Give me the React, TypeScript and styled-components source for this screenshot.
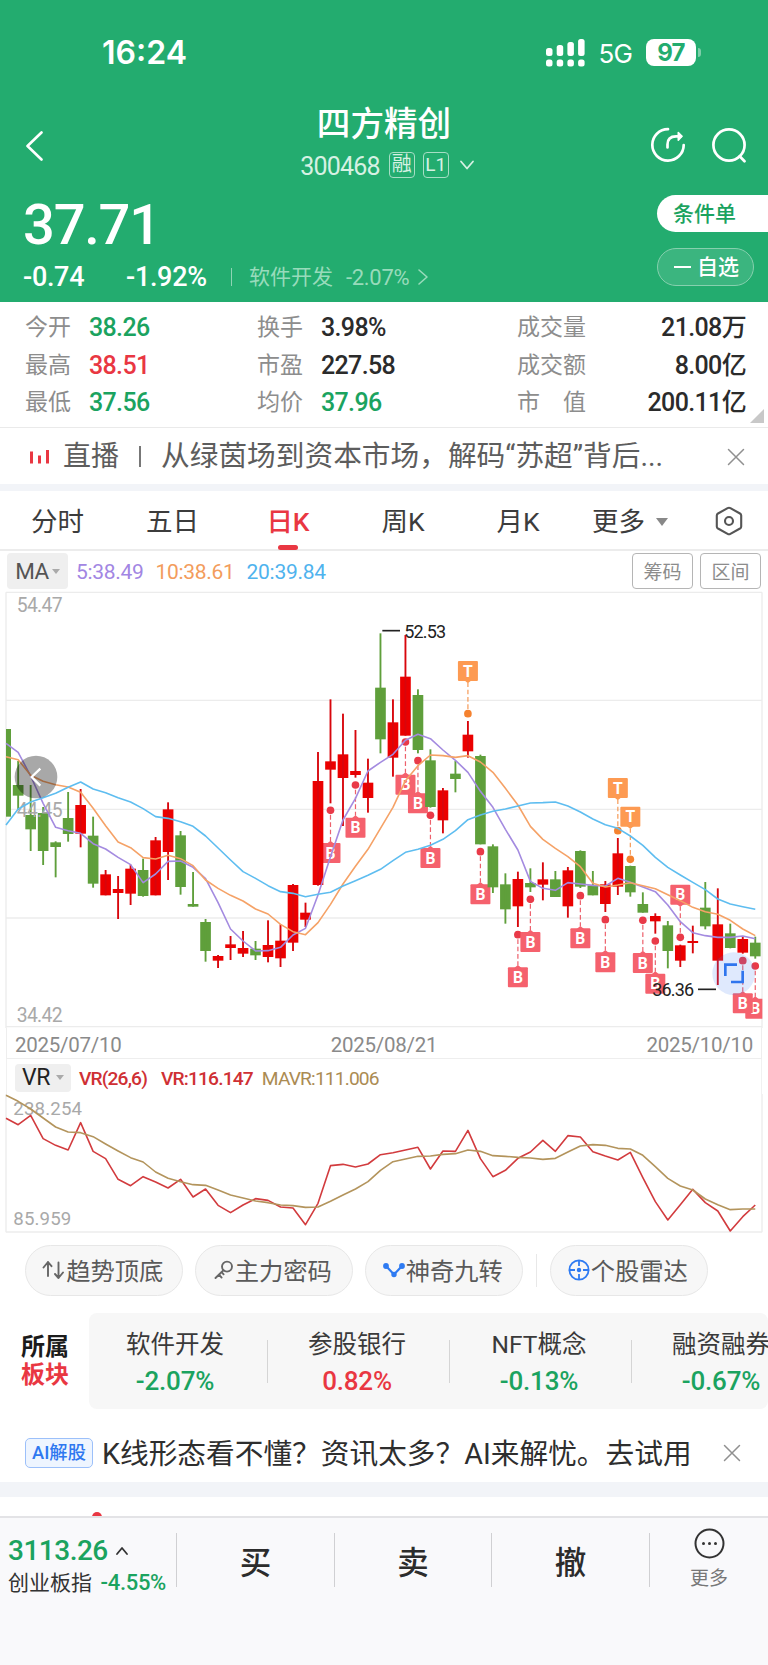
import React from "react";
import styled, { createGlobalStyle, css } from "styled-components";

const GREEN = "#23ac6f";
const UP = "#e93742";
const DOWN = "#1ba35f";
const CJK = `"Noto Sans CJK SC", sans-serif`;
const DIGITS = `Roboto, "Noto Sans CJK SC", sans-serif`;

type Tone = "up" | "down" | "plain";
const toneColor: Record<Tone, string> = { up: UP, down: DOWN, plain: "#2b2b2b" };

const GlobalStyle = createGlobalStyle`
  * { box-sizing: border-box; }
  body { margin: 0; background: #fff; font-family: ${DIGITS}; }
`;

const Screen = styled.div`
  width: 768px;
  height: 1665px;
  overflow: hidden;
  display: flex;
  flex-direction: column;
  background: #fff;
  color: #333;
  line-height: 1;
  white-space: nowrap;
`;

/* ---------- header ---------- */

const Header = styled.header`
  height: 302px;
  flex: none;
  background: ${GREEN};
  color: #fff;
  display: flex;
  flex-direction: column;
`;

const StatusBar = styled.div`
  height: 96px;
  padding: 9px 67px 0 102px;
  display: flex;
  align-items: center;
`;

const Clock = styled.span`
  font: 600 32px/1 Inter, sans-serif;
  flex: 1;
`;

const Network = styled.span`
  font: 400 26px/1 Inter, sans-serif;
  letter-spacing: -0.8px;
  margin: 2px 14px 0 13px;
`;

const Battery = styled.span`
  width: 50px;
  height: 27px;
  border-radius: 8px;
  background: #fff;
  color: ${GREEN};
  font: 700 24px/27px Inter, sans-serif;
  letter-spacing: -0.8px;
  text-align: center;
`;

const BatteryTip = styled.span`
  width: 3px;
  height: 9px;
  margin-left: 2px;
  border-radius: 0 3px 3px 0;
  background: #7fceaa;
`;

const NavBar = styled.div`
  height: 90px;
  display: grid;
  grid-template-columns: 200px 1fr 200px;
  padding: 0 21px 0 24px;
`;

const NavBack = styled.div`
  display: flex;
  align-items: center;
  padding-top: 9px;
`;

const NavActions = styled.div`
  display: flex;
  align-items: center;
  justify-content: flex-end;
  gap: 25px;
  padding-top: 8px;
`;

const TitleBlock = styled.div`
  display: flex;
  flex-direction: column;
  align-items: center;
`;

const StockName = styled.h1`
  margin: 8px 3px 0 0;
  font: 500 33.6px/36px ${CJK};
`;

const CodeRow = styled.div`
  display: flex;
  align-items: center;
  margin: 11px 0 0 4px;
  height: 27px;
  color: #d6f1e3;
  & > svg {
    margin-left: 2px;
  }
`;

const StockCode = styled.span`
  font-size: 25px;
  letter-spacing: -0.8px;
  margin-right: 9px;
  padding-top: 3px;
`;

const Badge = styled.span<{ $size: number }>`
  width: 26px;
  height: 26px;
  margin-right: 8px;
  border: 1.5px solid #a7dec5;
  border-radius: 4px;
  font: 400 ${(p) => p.$size}px/23px ${DIGITS};
  text-align: center;
`;

const Quote = styled.div`
  display: flex;
  justify-content: space-between;
  height: 116px;
`;

const QuoteLeft = styled.div`
  padding-left: 23px;
`;

const Price = styled.div`
  font-size: 56px;
  font-weight: 500;
  line-height: 60px;
  margin-top: 9px;
  letter-spacing: -1.2px;
`;

const ChangeRow = styled.div`
  display: flex;
  align-items: center;
  height: 30px;
  margin-top: 7px;
`;

const Change = styled.span<{ $width: number }>`
  font-size: 27px;
  font-weight: 500;
  letter-spacing: -0.3px;
  width: ${(p) => p.$width}px;
`;

const ChangeDivider = styled.span`
  width: 1px;
  height: 18px;
  background: #8fd4b4;
  margin-right: 17px;
`;

const Industry = styled.span`
  display: flex;
  align-items: center;
  color: #98dbbb;
  font-size: 21px;
`;

const IndustryPct = styled.span`
  font-size: 22px;
  margin: 1px 8px 0 13px;
  letter-spacing: -0.3px;
`;

const QuoteActions = styled.div`
  display: flex;
  flex-direction: column;
  gap: 16px;
  padding-top: 9px;
`;

const OrderButton = styled.div`
  width: 111px;
  height: 37px;
  padding-left: 16px;
  border-radius: 19px 0 0 19px;
  background: #fff;
  color: ${DOWN};
  font: 500 21px/35px ${CJK};
`;

const WatchButton = styled.div`
  width: 97px;
  height: 38px;
  padding: 0 0 3px 16px;
  border: 1px solid #86d0ae;
  border-radius: 19px;
  background: #3bb57f;
  font: 500 21px/1 ${CJK};
  display: flex;
  align-items: center;
  gap: 6px;
`;

const Minus = styled.i`
  width: 17px;
  height: 2.5px;
  margin-top: 3px;
  background: #fff;
`;

/* ---------- statistics ---------- */

const Stats = styled.section`
  position: relative;
  height: 126px;
  flex: none;
  padding: 5px 22px 0 25px;
  display: grid;
  grid-template-columns: 232px 260px 1fr;
  border-bottom: 1.5px solid #eaeaea;
`;

const StatColumn = styled.div`
  display: flex;
  flex-direction: column;
`;

const Stat = styled.div`
  height: 37.5px;
  display: flex;
  align-items: center;
`;

const StatLabel = styled.span<{ $wide?: boolean }>`
  width: ${(p) => (p.$wide ? 69 : 46)}px;
  margin-right: 18px;
  display: flex;
  justify-content: space-between;
  color: #8d8d8d;
  font: 400 23px/1 ${CJK};
`;

const StatValue = styled.span<{ $tone: Tone; $end?: boolean }>`
  color: ${(p) => toneColor[p.$tone]};
  font-size: 25px;
  font-weight: 500;
  letter-spacing: -0.65px;
  padding-top: 4px;
  ${(p) => p.$end && css`margin-left: auto;`}
`;

const Corner = styled.i`
  position: absolute;
  right: 4px;
  bottom: 4px;
  border: 7px solid transparent;
  border-right-color: #c8c8c8;
  border-bottom-color: #c8c8c8;
`;

/* ---------- live banner and tabs ---------- */

const LiveBanner = styled.section`
  height: 56px;
  flex: none;
  display: flex;
  align-items: center;
  padding: 1px 23px 0 30px;
  color: #5d5d5d;
  font-size: 28.7px;
  line-height: 1;
`;

const LiveTag = styled.span`
  font-size: 28px;
  margin-left: 14px;
`;

const LiveBar = styled.i`
  width: 2px;
  height: 21px;
  background: #777;
  margin: 0 20px;
`;

const Spacer = styled.div<{ $height: number }>`
  height: ${(p) => p.$height}px;
  flex: none;
  background: #f2f4f8;
`;

const Tabs = styled.nav`
  height: 60px;
  flex: none;
  display: grid;
  grid-template-columns: 115px 115px 116px 114px 116px 108px 1fr;
  border-bottom: 2px solid #ececec;
`;

const Tab = styled.div<{ $active?: boolean }>`
  position: relative;
  display: flex;
  align-items: center;
  justify-content: center;
  gap: 11px;
  padding-top: 4px;
  font-size: 26.5px;
  color: ${(p) => (p.$active ? UP : "#3c3c3c")};
  font-weight: ${(p) => (p.$active ? 500 : 400)};
  & > svg {
    margin: -3px 0 0 5px;
  }
  ${(p) => p.$active && css`
    &::after {
      content: "";
      position: absolute;
      bottom: -1px;
      width: 20px;
      height: 5px;
      border-radius: 3px;
      background: ${UP};
    }
  `}
`;

const Caret = styled.i<{ $size: number; $color: string }>`
  border-left: ${(p) => p.$size}px solid transparent;
  border-right: ${(p) => p.$size}px solid transparent;
  border-top: ${(p) => p.$size * 1.35}px solid ${(p) => p.$color};
`;

/* ---------- charts ---------- */

const IndicatorRow = styled.div`
  height: 39px;
  flex: none;
  display: flex;
  align-items: center;
  padding: 1px 7px 0;
`;

const IndicatorButton = styled.span<{ $w: number; $h: number; $dark?: boolean }>`
  width: ${(p) => p.$w}px;
  height: ${(p) => p.$h}px;
  margin-right: 8px;
  display: flex;
  align-items: center;
  justify-content: center;
  gap: ${(p) => (p.$dark ? 6 : 3)}px;
  border-radius: 4px;
  background: #efefef;
  color: ${(p) => (p.$dark ? "#222" : "#555")};
  font-size: ${(p) => (p.$dark ? 23 : 22.5)}px;
  letter-spacing: -0.5px;
`;

const Reading = styled.span<{ $color: string; $gap?: number }>`
  color: ${(p) => p.$color};
  font-size: 21px;
  letter-spacing: -0.3px;
  padding-top: 2px;
  margin-right: ${(p) => p.$gap ?? 0}px;
`;

const VrReading = styled(Reading)<{ $strong?: boolean }>`
  font-size: 19.2px;
  font-weight: ${(p) => (p.$strong ? 500 : 400)};
  letter-spacing: -0.85px;
`;

const RangeButtons = styled.div`
  display: flex;
  gap: 7px;
  margin-left: auto;
`;

const RangeButton = styled.span`
  width: 61px;
  height: 36px;
  border: 1.5px solid #b5b5b5;
  border-radius: 4px;
  color: #8c8c8c;
  font: 400 19px/33px ${CJK};
  text-align: center;
`;

const KChart = styled.svg`
  display: block;
  flex: none;
  width: 768px;
  height: 438px;
`;

const DateAxis = styled.div`
  height: 31px;
  flex: none;
  margin: 0 6px;
  padding: 4px 8px 0;
  display: flex;
  justify-content: space-between;
  align-items: center;
  color: #8a8a8a;
  font-size: 20.5px;
  letter-spacing: -0.25px;
  border: 1px solid #eee;
  border-top: 0;
`;

const VrHeader = styled.div`
  height: 35px;
  flex: none;
  margin: 0 6px;
  padding: 2px 8px 0;
  display: flex;
  align-items: center;
  border: solid #f1f1f1;
  border-width: 0 1px;
`;

const VrChart = styled.svg`
  display: block;
  flex: none;
  width: 768px;
  height: 139px;
`;

/* ---------- tools, sectors ---------- */

const Tools = styled.section`
  height: 76px;
  flex: none;
  padding: 0 0 2px 25px;
  display: flex;
  align-items: center;
`;

const Tool = styled.div`
  width: 157.5px;
  height: 51px;
  margin-right: 12.5px;
  border: 1px solid #e7e7e7;
  border-radius: 26px;
  background: #f7f7f7;
  display: flex;
  align-items: center;
  justify-content: center;
  gap: 1px;
  padding-right: 2px;
  color: #5a5a5a;
  font: 400 24.3px/1 ${CJK};
`;

const ToolDivider = styled.i`
  width: 1px;
  height: 33px;
  margin: 0 13px 0 1px;
  background: #e8e8e8;
`;

const Sectors = styled.section`
  height: 102px;
  flex: none;
  padding-top: 4px;
  display: flex;
`;

const SectorTitle = styled.div`
  width: 89px;
  padding: 18px 0 0 21px;
  font: 700 24px/28px ${CJK};
  color: #1b1b1b;
`;

const SectorAccent = styled.div`
  color: ${UP};
`;

const SectorList = styled.div`
  width: 679px;
  height: 96px;
  overflow: hidden;
  display: flex;
  align-items: center;
  border-radius: 8px;
  background: #f7f7f7;
`;

const Sector = styled.div`
  width: 182px;
  flex: none;
  height: 43px;
  display: flex;
  flex-direction: column;
  align-items: center;
  justify-content: center;
  gap: 11px;
  padding: 5px 3px 0 0;
  font-size: 24.5px;
  color: #3a3a3a;
  & + & {
    border-left: 1px solid #d5d5d5;
  }
  &:first-child {
    width: 178px;
    padding-right: 6px;
  }
`;

const SectorPct = styled.span<{ $tone: Tone }>`
  color: ${(p) => toneColor[p.$tone]};
  font-size: 26px;
  font-weight: 500;
  letter-spacing: -0.2px;
`;

/* ---------- AI strip and bottom bar ---------- */

const AiStrip = styled.section`
  height: 71px;
  flex: none;
  padding: 13px 27px 0 25px;
  display: flex;
  align-items: center;
`;

const AiBadge = styled.span`
  width: 68px;
  height: 30px;
  margin-right: 9px;
  border: 1px solid #9cc0fa;
  border-radius: 5px;
  background: #eef5ff;
  color: #2f78f0;
  font: 500 18.3px/27px ${DIGITS};
  text-align: center;
`;

const AiText = styled.span`
  padding-top: 2px;
  font-size: 28.7px;
  color: #2e2e2e;
`;

const Push = styled.span`
  margin-left: auto;
  display: flex;
`;

const Peek = styled.div`
  height: 19px;
  flex: none;
  overflow: hidden;
  padding: 15px 0 0 92px;
`;

const PeekDot = styled.div`
  width: 10px;
  height: 10px;
  border-radius: 5px;
  background: ${UP};
`;

const BottomBar = styled.footer`
  height: 149px;
  flex: none;
  border-top: 2px solid #e3e3e6;
  background: #f9f9fb;
  display: grid;
  grid-template-columns: 176px 158px 157px 158px 119px;
  align-items: start;
  padding-top: 15px;
`;

const IndexCell = styled.div`
  height: 54px;
  padding-left: 8px;
`;

const IndexValue = styled.div`
  display: flex;
  align-items: center;
  gap: 7px;
  padding-top: 4px;
  color: ${DOWN};
  font-size: 28px;
  font-weight: 500;
  letter-spacing: -0.5px;
`;

const IndexLine = styled.div`
  display: flex;
  align-items: center;
  justify-content: space-between;
  margin-top: 7px;
  width: 158px;
  font-size: 21px;
`;

const IndexPct = styled.span`
  color: ${DOWN};
  font-weight: 500;
  font-size: 22px;
  letter-spacing: -0.3px;
`;

const Action = styled.div`
  height: 54px;
  border-left: 1px solid #d0d0d3;
  text-align: center;
  color: #2c2c2c;
  font: 500 31.5px/54px ${CJK};
`;

const MoreCell = styled.div`
  height: 54px;
  border-left: 1px solid #d0d0d3;
  display: flex;
  flex-direction: column;
  align-items: center;
  color: #777;
  font: 400 19px/1 ${CJK};
  gap: 8px;
  & > svg {
    margin-top: -5px;
    flex: none;
  }
`;

/* ---------- data ---------- */

const STATS: { label: string[]; value: string; tone: Tone }[][] = [
  [
    { label: ["今", "开"], value: "38.26", tone: "down" },
    { label: ["最", "高"], value: "38.51", tone: "up" },
    { label: ["最", "低"], value: "37.56", tone: "down" },
  ],
  [
    { label: ["换", "手"], value: "3.98%", tone: "plain" },
    { label: ["市", "盈"], value: "227.58", tone: "plain" },
    { label: ["均", "价"], value: "37.96", tone: "down" },
  ],
  [
    { label: ["成", "交", "量"], value: "21.08万", tone: "plain" },
    { label: ["成", "交", "额"], value: "8.00亿", tone: "plain" },
    { label: ["市", "值"], value: "200.11亿", tone: "plain" },
  ],
];

/* Plot units: three per pixel. Each candle is [rising, high, bodyTop, bodyBottom, low]. */
const CANDLES: [number, number, number, number, number][] = [
  [0, 417, 417, 680, 680], [0, 513, 585, 617, 660], [0, 585, 675, 718, 783], [0, 651, 669, 783, 825],
  [0, 754, 757, 771, 862], [0, 606, 684, 732, 755], [1, 597, 645, 731, 772], [0, 680, 737, 881, 893],
  [1, 840, 853, 916, 916], [1, 858, 897, 909, 987], [1, 824, 836, 911, 945], [0, 806, 840, 918, 920],
  [1, 741, 751, 916, 916], [1, 637, 658, 786, 870], [0, 723, 736, 891, 914], [0, 846, 942, 950, 950],
  [0, 987, 996, 1083, 1115], [1, 1095, 1098, 1112, 1134], [1, 1038, 1063, 1074, 1110], [1, 1023, 1074, 1091, 1101],
  [0, 1053, 1076, 1096, 1110], [1, 991, 1065, 1101, 1117], [1, 1003, 1052, 1105, 1131], [1, 882, 885, 1058, 1083],
  [1, 938, 968, 989, 1011], [1, 486, 573, 885, 887], [1, 328, 514, 539, 640], [1, 371, 493, 564, 708],
  [1, 420, 543, 555, 563], [1, 506, 578, 624, 668], [0, 130, 293, 448, 490], [1, 328, 397, 503, 560],
  [1, 135, 260, 437, 437], [0, 298, 315, 480, 490], [0, 478, 511, 651, 653], [1, 594, 601, 691, 730],
  [0, 513, 551, 567, 607], [1, 393, 434, 484, 503], [0, 494, 498, 763, 763], [0, 763, 769, 892, 909],
  [0, 850, 883, 958, 1001], [1, 845, 867, 949, 1011], [0, 835, 879, 892, 906], [1, 817, 868, 884, 931],
  [0, 843, 868, 921, 921], [1, 831, 841, 949, 983], [0, 781, 783, 890, 894], [0, 843, 886, 916, 916],
  [1, 873, 883, 942, 966], [1, 744, 790, 890, 915], [0, 827, 828, 907, 920], [0, 907, 942, 968, 968],
  [1, 970, 978, 994, 1031], [0, 993, 1006, 1083, 1135], [1, 1064, 1066, 1112, 1131], [1, 1007, 1053, 1059, 1090],
  [0, 876, 953, 1009, 1018], [1, 895, 1003, 1112, 1185], [0, 1001, 1030, 1074, 1075], [1, 1040, 1047, 1088, 1091],
  [0, 1040, 1058, 1099, 1106],
];

const MA5 = [460, 487, 558, 640, 712, 722, 730, 761, 777, 802, 824, 878, 852, 814, 813, 832, 866, 938, 1017, 1053, 1083, 1082, 1072, 1035, 1015, 915, 800, 690, 625, 543, 517, 493, 451, 433, 446, 480, 511, 547, 604, 652, 718, 780, 874, 895, 901, 878, 882, 886, 888, 865, 877, 891, 905, 945, 995, 1028, 1037, 1042, 1042, 1038, 1046];
const MA10 = [500, 509, 556, 574, 584, 591, 607, 655, 707, 756, 773, 803, 807, 796, 806, 827, 870, 895, 916, 933, 957, 972, 1003, 1025, 1034, 998, 943, 882, 829, 778, 715, 652, 572, 527, 495, 497, 502, 497, 516, 547, 595, 645, 709, 748, 775, 800, 830, 880, 891, 885, 878, 887, 896, 914, 932, 952, 965, 973, 991, 1017, 1037];
const MA20 = [705, 657, 636, 623, 610, 592, 576, 597, 608, 623, 636, 656, 680, 685, 695, 709, 738, 774, 810, 845, 865, 887, 905, 910, 920, 913, 907, 888, 872, 856, 838, 812, 787, 778, 766, 748, 722, 689, 675, 664, 657, 648, 639, 638, 636, 648, 666, 687, 704, 715, 738, 766, 802, 832, 855, 877, 899, 927, 942, 950, 958];
const VR = [278, 297, 269, 339, 359, 373, 291, 377, 399, 461, 480, 453, 469, 487, 461, 514, 490, 539, 561, 538, 519, 524, 544, 547, 597, 533, 420, 416, 424, 415, 387, 381, 373, 365, 430, 376, 377, 314, 399, 453, 434, 398, 379, 344, 377, 330, 334, 378, 391, 403, 380, 456, 528, 583, 537, 491, 531, 556, 616, 573, 538];
const MAVR = [209, 227, 250, 277, 304, 319, 321, 333, 355, 376, 396, 409, 439, 458, 468, 477, 479, 493, 508, 517, 526, 531, 538, 540, 545, 544, 527, 508, 490, 468, 434, 408, 400, 392, 391, 386, 384, 373, 377, 390, 392, 395, 397, 401, 398, 379, 361, 357, 359, 368, 370, 389, 423, 458, 481, 493, 520, 537, 552, 550, 550];

/* Trade markers: [letter, candle index, dot y, flag above the dot] */
const MARKERS: ["B" | "T", number, number, boolean][] = [
  ["B", 26, 661, false], ["B", 28, 585, false], ["B", 32, 456, false], ["B", 33, 512, false],
  ["B", 34, 676, false], ["B", 38, 785, false], ["B", 41, 1034, false], ["B", 42, 928, false],
  ["B", 46, 917, false], ["B", 48, 989, false], ["B", 51, 991, false], ["B", 52, 1053, false],
  ["B", 54, 1042, true], ["B", 60, 1128, false], ["B", 59, 1112, false],
  ["T", 37, 371, true], ["T", 49, 722, true], ["T", 50, 808, true],
];

const SECTORS: { name: string; pct: string; tone: Tone }[] = [
  { name: "软件开发", pct: "-2.07%", tone: "down" },
  { name: "参股银行", pct: "0.82%", tone: "up" },
  { name: "NFT概念", pct: "-0.13%", tone: "down" },
  { name: "融资融券", pct: "-0.67%", tone: "down" },
];

const xAt = (i: number) => 17 + i * 37.48;
const line = (ys: number[]) => ys.map((y, i) => `${Math.max(18, xAt(i)).toFixed(1)},${y}`).join(" ");

/* ---------- icons ---------- */

const SignalIcon = () => (
  <svg width="39" height="28" viewBox="0 0 39 28" fill="#fff">
    {[0, 1, 2, 3].map((i) => (
      <g key={i}>
        <rect x={i * 10.7} y={9 - i * 3} width="6.5" height={8 + i * 3} rx="2.5" />
        <rect x={i * 10.7} y="20.5" width="6.5" height="7" rx="2.5" />
      </g>
    ))}
  </svg>
);

const Chevron = ({ w, h, d, stroke = "currentColor", sw = 2 }: { w: number; h: number; d: string; stroke?: string; sw?: number }) => (
  <svg width={w} height={h} viewBox={`0 0 ${w} ${h}`} fill="none" stroke={stroke} strokeWidth={sw} strokeLinecap="round" strokeLinejoin="round">
    <path d={d} />
  </svg>
);

const ShareIcon = () => (
  <svg width="36" height="36" viewBox="0 0 36 36" fill="none" stroke="#fff" strokeWidth="2.7" strokeLinecap="round" strokeLinejoin="round">
    <path d="M18 2.2A15.7 15.7 0 1 0 33.7 18" />
    <path d="M17.5 20.5V17.5C17.5 12 20.5 9.3 26 9.3H31" />
    <path d="M28.3 5.6L32 9.3L28.3 13.2Z" fill="#fff" strokeWidth="1.6" />
  </svg>
);

const SearchIcon = () => (
  <svg width="36" height="36" viewBox="0 0 36 36" fill="none" stroke="#fff" strokeWidth="2.7" strokeLinecap="round">
    <circle cx="18" cy="18" r="15.6" />
    <path d="M28.7 29.3l4.8 5" />
  </svg>
);

const CloseIcon = () => <Chevron w={18} h={18} d="M1.5 1.5l15 15M16.5 1.5l-15 15" stroke="#909090" sw={1.5} />;

const LiveIcon = () => (
  <svg width="19" height="14" viewBox="0 0 19 14" fill={UP}>
    <rect x="0" y="1.5" width="3" height="12" />
    <rect x="8" y="5.5" width="3" height="8" />
    <rect x="16" y="0" width="3" height="13.5" />
  </svg>
);

const SettingsIcon = () => (
  <svg width="28" height="30" viewBox="0 0 28 30" fill="none" stroke="#555" strokeWidth="2.1" strokeLinejoin="round">
    <path d="M12.6 2.2Q14 1.4 15.4 2.2L25 7.5Q26.2 8.2 26.2 9.6V20.4Q26.2 21.8 25 22.5L15.4 27.8Q14 28.6 12.6 27.8L3 22.5Q1.8 21.8 1.8 20.4V9.6Q1.8 8.2 3 7.5Z" />
    <circle cx="14" cy="15" r="4" />
  </svg>
);

const ArrowsIcon = () => (
  <svg width="23" height="20" viewBox="0 0 23 20" fill="none" stroke="#666" strokeWidth="1.9" strokeLinecap="round" strokeLinejoin="round">
    <path d="M1.5 7.5L6 2L9.5 6.2M6 2V16" />
    <path d="M13 14L16.5 18L21 12.5M16.5 18V2.5" />
  </svg>
);

const KeyIcon = () => (
  <svg width="20" height="20" viewBox="0 0 20 20" fill="none" stroke="#666" strokeWidth="1.9" strokeLinecap="round" strokeLinejoin="round">
    <circle cx="13" cy="6.6" r="5" />
    <path d="M9.5 10.2L1.5 18M5 14.6l2.6 3M7.6 12l2 2.3" />
  </svg>
);

const NineIcon = () => (
  <svg width="22" height="16" viewBox="0 0 22 16" fill="#2f7bf2" stroke="#2f7bf2" strokeWidth="2.2">
    <path d="M3 4l8 8.5L19 4" fill="none" />
    <circle cx="3" cy="4" r="1.8" />
    <circle cx="11" cy="12.5" r="1.6" />
    <circle cx="19" cy="4" r="1.8" />
  </svg>
);

const RadarIcon = () => (
  <svg width="22" height="22" viewBox="0 0 22 22" fill="none" stroke="#2f7bf2" strokeWidth="1.8">
    <circle cx="11" cy="11" r="9.6" />
    <path d="M11 1v6M11 15v6M1 11h6M15 11h6" />
    <circle cx="11" cy="11" r="1.3" fill="#2f7bf2" />
  </svg>
);

const MoreIcon = () => (
  <svg width="31" height="31" viewBox="0 0 31 31" fill="none" stroke="#333" strokeWidth="2">
    <circle cx="15.5" cy="15.5" r="14" />
    <g fill="#333" stroke="none">
      <circle cx="9.5" cy="15.5" r="1.5" />
      <circle cx="15.5" cy="15.5" r="1.5" />
      <circle cx="21.5" cy="15.5" r="1.5" />
    </g>
  </svg>
);

const Marker = ({ kind, index, dot, above }: { kind: "B" | "T"; index: number; dot: number; above: boolean }) => {
  const x = xAt(index);
  const dir = above ? -1 : 1;
  const box = dot + 128 * dir;
  const fill = kind === "B" ? "#f5616d" : "#fd9a52";
  const dotFill = kind === "B" ? "#e93a48" : "#f5822f";
  return (
    <g>
      <line x1={x} x2={x} y1={dot + 14 * dir} y2={box - 36 * dir} stroke={dotFill} strokeWidth="3.6" strokeDasharray="14 8" opacity="0.8" />
      <path d={`M${x - 11} ${box - 28 * dir}L${x} ${box - 37 * dir}L${x + 11} ${box - 28 * dir}Z`} fill={fill} />
      <rect x={x - 30} y={box - 30} width="60" height="60" rx="3" fill={fill} />
      <text x={x} y={box + 17} textAnchor="middle" fontSize="47" fontWeight="700" fill="#fff">{kind}</text>
      <circle cx={x} cy={dot} r="11.5" fill={dotFill} />
    </g>
  );
};

const PriceChart = () => (
  <KChart viewBox="0 0 2304 1314" fontFamily="Roboto, sans-serif">
    <defs>
      <clipPath id="plot-area">
        <rect x="18" y="0" width="2269" height="1314" />
      </clipPath>
    </defs>
    <g stroke="#ececec" strokeWidth="4">
      {[7, 331, 658, 984, 1310].map((y) => (
        <line key={y} x1="18" x2="2286" y1={y} y2={y} />
      ))}
      <line x1="18" x2="18" y1="7" y2="1314" />
      <line x1="2286" x2="2286" y1="7" y2="1314" />
    </g>
    <g clipPath="url(#plot-area)">
      {MARKERS.map(([kind, index, dot, above]) => (
        <Marker key={kind + index} kind={kind} index={index} dot={dot} above={above} />
      ))}
    </g>
    {CANDLES.map(([up, high, top, bottom, low], i) => {
      const x = xAt(i);
      const left = Math.max(18, x - 16);
      return (
        <g key={i} fill={up ? "#eb0000" : "#5f9f3b"}>
          <rect x={left} y={top} width={x + 16 - left} height={bottom - top} />
          {i > 0 && (
            <rect x={x - 2.8} y={high} width="5.6" height={low - high} fill={up ? "#d8060c" : undefined} />
          )}
        </g>
      );
    })}
    <g fontSize="58" fill="#a9a9a9">
      <text x="50" y="66" textLength="138">54.47</text>
      <text x="50" y="680" textLength="138">44.45</text>
      <text x="50" y="1297" textLength="138">34.42</text>
    </g>
    <g fill="none" strokeWidth="4.8" strokeLinejoin="round">
      <polyline points={line(MA5)} stroke="#a48be0" />
      <polyline points={line(MA10)} stroke="#f5a267" />
      <polyline points={line(MA20)} stroke="#5ebdf0" />
    </g>
    <g fill="#222" stroke="#222">
      <line x1="1147" x2="1200" y1="122" y2="122" strokeWidth="5" />
      <text x="1213" y="143" fontSize="54" textLength="125" stroke="none">52.53</text>
      <text x="1957" y="1219" fontSize="54" textLength="125" stroke="none">36.36</text>
      <line x1="2094" x2="2148" y1="1198" y2="1198" strokeWidth="5" />
    </g>
    <circle cx="108" cy="561" r="64" fill="#000" fillOpacity="0.34" />
    <path d="M121 536L95 561L121 587" fill="none" stroke="#fff" strokeWidth="7" />
    <circle cx="2201" cy="1151" r="64" fill="#3f7ef5" fillOpacity="0.17" />
    <path d="M2176 1158V1124H2211M2228 1142V1176H2193" fill="none" stroke="#2f75ee" strokeWidth="8" />
  </KChart>
);

const VolumeRatioChart = () => (
  <VrChart viewBox="0 205 2304 417" fontFamily="Roboto, sans-serif">
    <g stroke="#ececec" strokeWidth="4">
      <line x1="18" x2="18" y1="205" y2="620" />
      <line x1="2286" x2="2286" y1="205" y2="620" />
      <line x1="18" x2="2286" y1="619" y2="619" />
    </g>
    <g fontSize="56" fill="#a9a9a9">
      <text x="40" y="268" textLength="206">238.254</text>
      <text x="40" y="599" textLength="174">85.959</text>
    </g>
    <g fill="none" strokeWidth="4.8" strokeLinejoin="round">
      <polyline points={line(VR)} stroke="#d23b3e" />
      <polyline points={line(MAVR)} stroke="#b3945c" />
    </g>
  </VrChart>
);

export default function App() {
  return (
    <Screen>
      <GlobalStyle />
      <Header>
        <StatusBar>
          <Clock>16:24</Clock>
          <SignalIcon />
          <Network>5G</Network>
          <Battery>97</Battery>
          <BatteryTip />
        </StatusBar>
        <NavBar>
          <NavBack>
            <Chevron w={20} h={30} d="M17.5 1.5L3.5 15l14 13.5" sw={2.6} />
          </NavBack>
          <TitleBlock>
            <StockName>四方精创</StockName>
            <CodeRow>
              <StockCode>300468</StockCode>
              <Badge $size={20}>融</Badge>
              <Badge $size={19}>L1</Badge>
              <Chevron w={16} h={10} d="M2 1.5l6 7 6-7" sw={1.8} />
            </CodeRow>
          </TitleBlock>
          <NavActions>
            <ShareIcon />
            <SearchIcon />
          </NavActions>
        </NavBar>
        <Quote>
          <QuoteLeft>
            <Price>37.71</Price>
            <ChangeRow>
              <Change $width={103}>-0.74</Change>
              <Change $width={105}>-1.92%</Change>
              <ChangeDivider />
              <Industry>
                软件开发
                <IndustryPct>-2.07%</IndustryPct>
                <Chevron w={12} h={18} d="M2 2l8 7-8 7" sw={1.6} />
              </Industry>
            </ChangeRow>
          </QuoteLeft>
          <QuoteActions>
            <OrderButton>条件单</OrderButton>
            <WatchButton>
              <Minus />
              自选
            </WatchButton>
          </QuoteActions>
        </Quote>
      </Header>

      <Stats>
        {STATS.map((column, c) => (
          <StatColumn key={c}>
            {column.map((s) => (
              <Stat key={s.value}>
                <StatLabel $wide={c === 2}>
                  {s.label.map((ch) => (
                    <span key={ch}>{ch}</span>
                  ))}
                </StatLabel>
                <StatValue $tone={s.tone} $end={c === 2}>{s.value}</StatValue>
              </Stat>
            ))}
          </StatColumn>
        ))}
        <Corner />
      </Stats>

      <LiveBanner>
        <LiveIcon />
        <LiveTag>直播</LiveTag>
        <LiveBar />
        从绿茵场到资本市场，解码“苏超”背后...
        <Push>
          <CloseIcon />
        </Push>
      </LiveBanner>
      <Spacer $height={7} />

      <Tabs>
        <Tab>分时</Tab>
        <Tab>五日</Tab>
        <Tab $active>日K</Tab>
        <Tab>周K</Tab>
        <Tab>月K</Tab>
        <Tab>
          更多
          <Caret $size={6.5} $color="#888" />
        </Tab>
        <Tab>
          <SettingsIcon />
        </Tab>
      </Tabs>

      <IndicatorRow>
        <IndicatorButton $w={61} $h={36}>
          MA
          <Caret $size={4} $color="#aaa" />
        </IndicatorButton>
        <Reading $color="#a286e3" $gap={12}>5:38.49</Reading>
        <Reading $color="#f39c5c" $gap={12}>10:38.61</Reading>
        <Reading $color="#4fb3ee">20:39.84</Reading>
        <RangeButtons>
          <RangeButton>筹码</RangeButton>
          <RangeButton>区间</RangeButton>
        </RangeButtons>
      </IndicatorRow>
      <PriceChart />
      <DateAxis>
        <span>2025/07/10</span>
        <span>2025/08/21</span>
        <span>2025/10/10</span>
      </DateAxis>
      <VrHeader>
        <IndicatorButton $w={56} $h={28} $dark>
          VR
          <Caret $size={4} $color="#aaa" />
        </IndicatorButton>
        <VrReading $color="#cf3034" $gap={14} $strong>VR(26,6)</VrReading>
        <VrReading $color="#cf3034" $gap={9} $strong>VR:116.147</VrReading>
        <VrReading $color="#ab8b52">MAVR:111.006</VrReading>
      </VrHeader>
      <VolumeRatioChart />

      <Tools>
        <Tool><ArrowsIcon />趋势顶底</Tool>
        <Tool><KeyIcon />主力密码</Tool>
        <Tool><NineIcon />神奇九转</Tool>
        <ToolDivider />
        <Tool><RadarIcon />个股雷达</Tool>
      </Tools>

      <Sectors>
        <SectorTitle>
          所属
          <SectorAccent>板块</SectorAccent>
        </SectorTitle>
        <SectorList>
          {SECTORS.map((s) => (
            <Sector key={s.name}>
              {s.name}
              <SectorPct $tone={s.tone}>{s.pct}</SectorPct>
            </Sector>
          ))}
        </SectorList>
      </Sectors>

      <AiStrip>
        <AiBadge>AI解股</AiBadge>
        <AiText>K线形态看不懂？资讯太多？AI来解忧。去试用</AiText>
        <Push>
          <CloseIcon />
        </Push>
      </AiStrip>
      <Spacer $height={15} />
      <Peek>
        <PeekDot />
      </Peek>

      <BottomBar>
        <IndexCell>
          <IndexValue>
            3113.26
            <Chevron w={14} h={10} d="M2 8l5-6 5 6" stroke="#333" sw={1.8} />
          </IndexValue>
          <IndexLine>
            创业板指
            <IndexPct>-4.55%</IndexPct>
          </IndexLine>
        </IndexCell>
        <Action>买</Action>
        <Action>卖</Action>
        <Action>撤</Action>
        <MoreCell>
          <MoreIcon />
          更多
        </MoreCell>
      </BottomBar>
    </Screen>
  );
}
